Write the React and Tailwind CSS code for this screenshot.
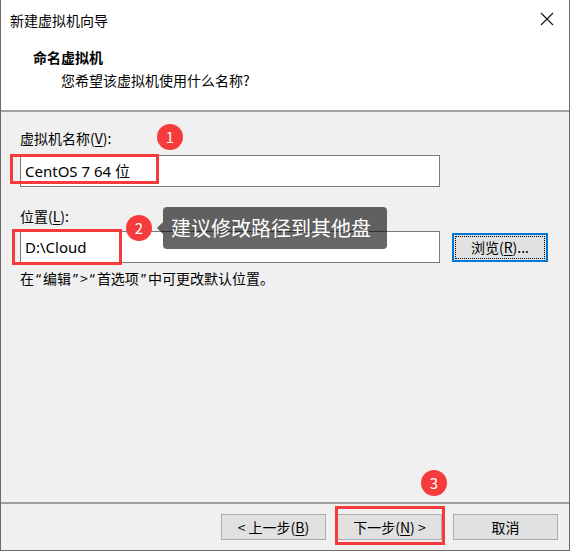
const font = { fontFamily: '"Microsoft YaHei UI", "Noto Sans CJK SC", "Noto Sans", sans-serif' };
const latin = { fontFamily: '"Noto Sans", "Noto Sans CJK SC", sans-serif' };

const Badge = ({ n, className }) => (
  <div
    className={`absolute w-[26px] h-[26px] rounded-full bg-[#f53b3b] text-white text-[15px] leading-[26px] text-center ${className}`}
  >
    {n}
  </div>
);

const U = ({ children }) => <span className="underline underline-offset-2">{children}</span>;

const Q = ({ children }) => (
  <span className="px-[2px]" style={latin}>
    {children}
  </span>
);

const WinButton = ({ children }) => (
  <button className="w-[105px] h-[26px] bg-[#e1e1e1] border border-[#adadad] text-[14px] leading-[24px] text-black">
    {children}
  </button>
);

export default function App() {
  return (
    <div
      className="relative w-[570px] h-[551px] flex flex-col border-l border-r border-b border-[#6a6a6a] bg-[#f0f0f0] text-black overflow-hidden"
      style={font}
    >
      {/* header */}
      <div className="h-[110px] bg-white flex flex-col">
        <div className="flex items-center justify-between pl-[9px] pr-[15px] pt-[10px] h-[30px]">
          <span className="text-[14px] leading-[20px]">新建虚拟机向导</span>
          <svg width="14" height="14" viewBox="0 0 14 14" className="mt-[-2px]">
            <path d="M1 1L13 13M13 1L1 13" stroke="#111" strokeWidth="1.1" />
          </svg>
        </div>
        <div className="pl-[32px] mt-[17px] text-[14px] leading-[20px] font-bold">命名虚拟机</div>
        <div className="pl-[60px] mt-[3px] text-[14px] leading-[20px]">您希望该虚拟机使用什么名称?</div>
      </div>
      <div className="h-[2px] bg-[#a0a0a0]" />

      {/* content */}
      <div className="flex-1 pl-[19px] pt-[16px] flex flex-col">
        <div className="text-[14px] leading-[20px]">
          虚拟机名称(<U>V</U>):
        </div>
        <div
          className="mt-[7px] w-[420px] h-[32px] bg-white border border-[#7a7a7a] pl-[4px] text-[15px] leading-[30px]"
          style={latin}
        >
          CentOS 7 64 位
        </div>
        <div className="mt-[19px] text-[14px] leading-[20px]">
          位置(<U>L</U>):
        </div>
        <div className="mt-[5px] flex items-center gap-[12px]">
          <div
            className="w-[420px] h-[32px] bg-white border border-[#7a7a7a] pl-[4px] text-[15px] leading-[30px]"
            style={latin}
          >
            D:\Cloud
          </div>
          <div className="w-[96px] h-[29px] border-2 border-[#0078d7] bg-[#e1e1e1] p-[1px]">
            <div className="w-full h-full border border-dotted border-black text-[14px] leading-[21px] text-center">
              浏览(<U>R</U>)...
            </div>
          </div>
        </div>
        <div className="mt-[5px] text-[14px] leading-[20px]">
          在<Q>“</Q>编辑<Q>”</Q>&gt;<Q>“</Q>首选项<Q>”</Q>中可更改默认位置。
        </div>
      </div>

      {/* footer */}
      <div className="h-[48px] border-t-2 border-[#a0a0a0] flex justify-end items-start gap-[11px] pt-[10px] pr-[11px]">
        <WinButton>
          &lt; 上一步(<U>B</U>)
        </WinButton>
        <WinButton>
          下一步(<U>N</U>) &gt;
        </WinButton>
        <WinButton>取消</WinButton>
      </div>

      {/* annotations */}
      <div className="absolute left-[9px] top-[154px] w-[149px] h-[30px] border-[3px] border-[#f53b3b]" />
      <div className="absolute left-[11px] top-[229px] w-[110px] h-[36px] border-[3px] border-[#f53b3b]" />
      <div className="absolute left-[334px] top-[506px] w-[110px] h-[39px] border-[3px] border-[#f53b3b]" />

      <Badge n="1" className="left-[156px] top-[124px]" />
      <Badge n="2" className="left-[125px] top-[215px]" />
      <Badge n="3" className="left-[420px] top-[470px]" />

      <div className="absolute left-[162px] top-[207px] w-[224px] h-[42px] rounded-[4px] bg-black/60 text-white text-[20px] leading-[42px] pl-[8px]">
        建议修改路径到其他盘
        <div className="absolute left-[-6px] top-[15px] w-0 h-0 border-y-[6px] border-y-transparent border-r-[6px] border-r-black/60" />
      </div>
    </div>
  );
}
